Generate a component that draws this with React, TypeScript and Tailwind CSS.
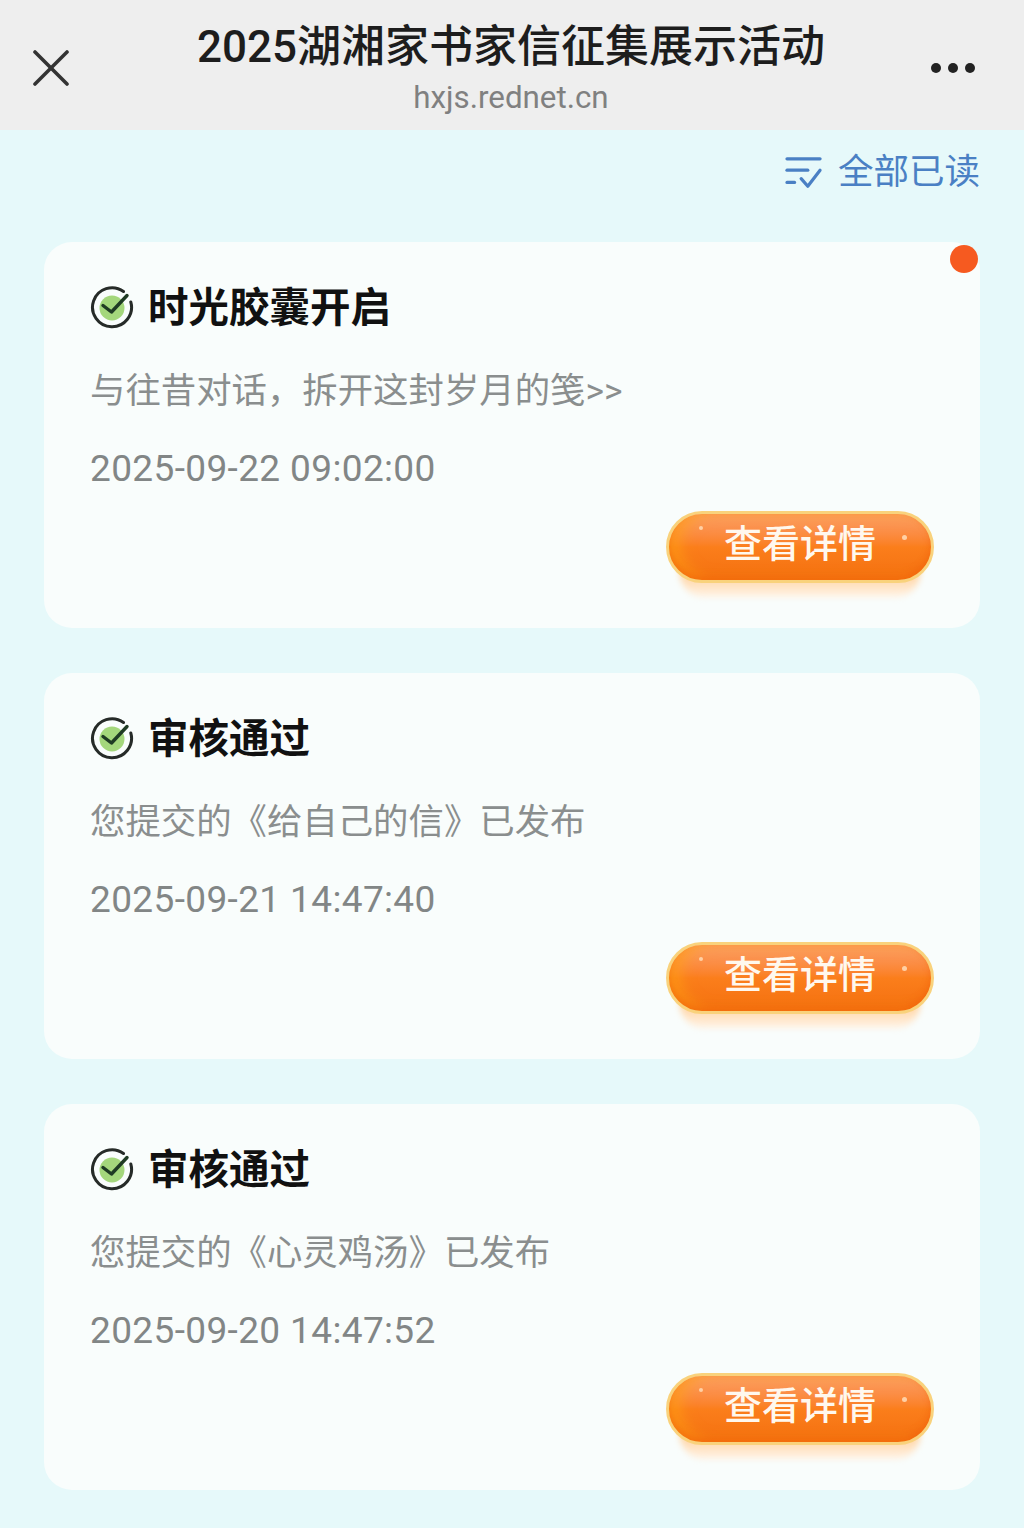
import React from 'react';

const FONT = "font-['Roboto','Noto_Sans_CJK_SC',sans-serif]";

type Notice = {
  title: string;
  body: string;
  time: string;
  unread?: boolean;
};

const notices: Notice[] = [
  { title: '时光胶囊开启', body: '与往昔对话，拆开这封岁月的笺>>', time: '2025-09-22 09:02:00', unread: true },
  { title: '审核通过', body: '您提交的《给自己的信》已发布', time: '2025-09-21 14:47:40' },
  { title: '审核通过', body: '您提交的《心灵鸡汤》已发布', time: '2025-09-20 14:47:52' },
];

function CheckBadge() {
  return (
    <svg width="44" height="44" viewBox="0 0 44 44" fill="none" className="shrink-0">
      <circle cx="22" cy="23" r="12.5" fill="#a4d77c" />
      <path
        d="M33.5 6.5A19.5 19.5 0 1 0 40.8 17"
        stroke="#262b28"
        strokeWidth="3"
        strokeLinecap="round"
      />
      <path
        d="M13 20.5l8.5 6.5L37 10.5"
        stroke="#1f3b24"
        strokeWidth="3.4"
        strokeLinecap="round"
        strokeLinejoin="round"
      />
    </svg>
  );
}

function ReadAllIcon() {
  return (
    <svg width="38" height="34" viewBox="0 0 40 36" fill="none" stroke="#4a80c4" strokeWidth="3.4" strokeLinecap="round" strokeLinejoin="round">
      <path d="M2 3h35" />
      <path d="M2 15h22" />
      <path d="M2 28h8" />
      <path d="M17 24l7 8 13-17" />
    </svg>
  );
}

function DetailButton() {
  return (
    <div className="relative h-[88px] w-[268px]">
      <div className="absolute bottom-[2px] left-[14px] right-[14px] h-[30px] rounded-b-[24px] bg-gradient-to-b from-[#ffc98a] to-[#fff3e6] blur-[3px]" />
      <button className="relative flex h-[72px] w-[268px] items-center justify-center rounded-full border-[3px] border-[#f9d27c] bg-gradient-to-b from-[#fb9f66] via-[#fb7e1b] to-[#f4700f] pb-[7px] text-[38px] leading-none font-medium text-[#fff8ee] shadow-[inset_0_-4px_6px_rgba(240,90,10,0.5),inset_12px_0_14px_rgba(255,160,20,0.6)]">
        查看详情
        <span className="absolute left-[30px] top-[12px] h-1 w-1 rounded-full bg-[#ffd0a5]" />
        <span className="absolute right-[24px] top-[21px] h-[5px] w-[5px] rounded-full bg-[#ffd0a5]" />
      </button>
    </div>
  );
}

function NoticeCard({ notice }: { notice: Notice }) {
  return (
    <div className="relative h-[385.5px] rounded-[28px] bg-[#f9fdfc] pl-[46px] pr-[46px] pt-[40px]">
      {notice.unread && (
        <span className="absolute right-[2px] top-[3px] h-[28px] w-[28px] rounded-full bg-[#f65a20]" />
      )}
      <div className="flex h-[50px] items-center gap-[14px]">
        <CheckBadge />
        <span className="pt-[2px] text-[40.5px] leading-none font-bold text-[#111]">{notice.title}</span>
      </div>
      <p className="mt-[35px] text-[35.4px] leading-[48px] text-[#8a8e8e]">{notice.body}</p>
      <p className="mt-[30px] text-[37px] leading-[48px] tracking-[0.37px] text-[#828686]">{notice.time}</p>
      <div className="mt-[18px] flex justify-end">
        <DetailButton />
      </div>
    </div>
  );
}

export default function App() {
  return (
    <div className={`h-[1528px] w-[1024px] overflow-hidden bg-[#e6f9fa] ${FONT}`}>
      <header className="grid h-[130px] grid-cols-[1fr_auto_1fr] items-center bg-[#eeeeee] pl-[33px] pr-[49px] pt-[6px]">
        <svg width="36" height="36" viewBox="0 0 36 36" fill="none" stroke="#333" strokeWidth="3.6" strokeLinecap="round">
          <path d="M2 2l32 32" />
          <path d="M34 2L2 34" />
        </svg>
        <div className="flex flex-col items-center pl-[14px]">
          <h1 className="text-[44px] leading-[52px] font-medium text-[#1d1d1d]">2025湖湘家书家信征集展示活动</h1>
          <span className="mt-[7px] text-[31.3px] leading-[36px] text-[#808080]">hxjs.rednet.cn</span>
        </div>
        <div className="flex justify-end gap-[7px]">
          <span className="h-[10px] w-[10px] rounded-full bg-[#222]" />
          <span className="h-[10px] w-[10px] rounded-full bg-[#222]" />
          <span className="h-[10px] w-[10px] rounded-full bg-[#222]" />
        </div>
      </header>

      <div className="px-[44px]">
        <div className="flex h-[80px] items-center justify-end gap-[15px] pt-[5px] text-[35.5px] text-[#4a80c4]">
          <ReadAllIcon />
          <span>全部已读</span>
        </div>
        <div className="mt-[32px] flex flex-col gap-[45.5px]">
          {notices.map((n) => (
            <NoticeCard key={n.time} notice={n} />
          ))}
        </div>
      </div>
    </div>
  );
}
